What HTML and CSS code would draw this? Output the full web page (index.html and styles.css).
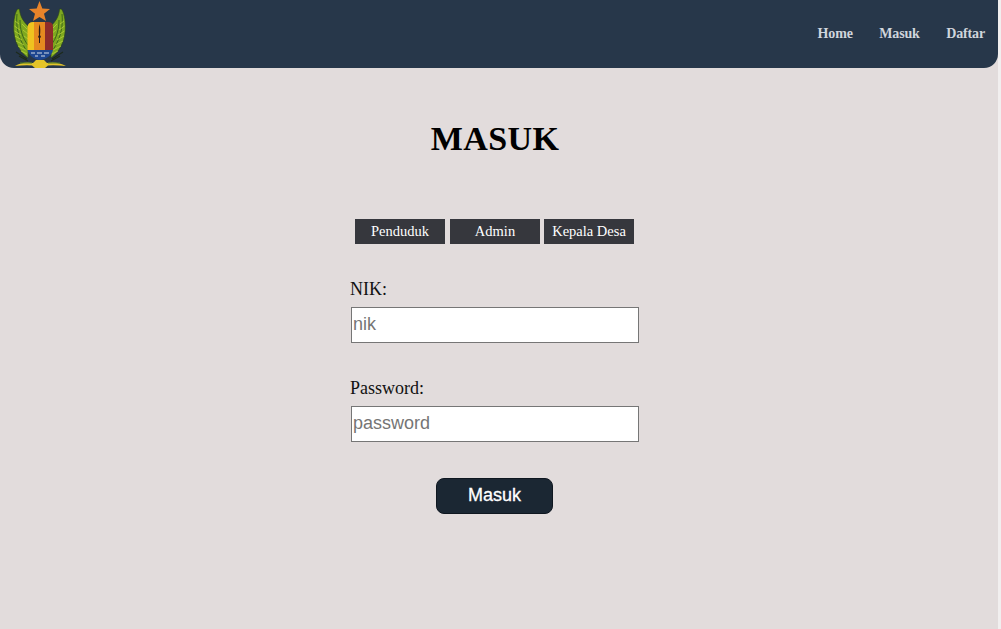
FILE: index.html
```html
<!DOCTYPE html>
<html lang="id">
<head>
<meta charset="utf-8">
<title>Masuk</title>
<link rel="stylesheet" href="styles.css">
</head>
<body>
<header class="topbar">
  <svg class="logo" viewBox="0 0 54 68" width="54" height="68" aria-hidden="true">
    <path d="M26.500 1 L29.300 8.500 L37 9 L31 13.800 L33 21 L26.500 17 L20 21 L22 13.800 L16 9 L23.700 8.500 Z" fill="#e8842a"/>
    <g id="wing">
      <path d="M4.500 9 C1 14 0 24 1 33 C2 42 6 51 15 58 L16 27 C11 22 7 17 6.500 9 Z" fill="#7ea81f" stroke="#2b4420" stroke-width=".7"/>
      <path d="M4 14 C3 24 4 36 13 50 M7 20 C7 28 9 38 15 45" fill="none" stroke="#36601c" stroke-width=".9"/>
      <path d="M2 21 L6 24 M1.500 26 L7 30 M1.500 31 L8 35 M2 36 L9 40 M3 41 L11 45 M5 46 L13 50 M8 51 L14 54 M9 24 L14 29 M10 30 L15 34 M11 36 L15 39" fill="none" stroke="#b6cf3a" stroke-width=".8"/>
    </g>
    <use href="#wing" transform="matrix(-1 0 0 1 53 0)"/>
    <path d="M14.500 27 Q15 22 20 22 H21 V50 H14.500 Z" fill="#efc31f"/>
    <path d="M21 22 H32 V50 H21 Z" fill="#e58a20"/>
    <path d="M32 22 H35 Q40 22 40 27 V50 H32 Z" fill="#8e2c2a"/>
    <path d="M26.500 24 C27.500 28 27.500 31 27 35 L28 37 L27 38 L27 43 H26 L26 38 L25 37 L26 35 C25.700 31 25.800 28 26.500 24 Z" fill="#2a1a16"/>
    <path d="M14.500 50 H40 C39 55 34 59 27 60 C20 59 15.500 55 14.500 50 Z" fill="#1d4690"/>
    <path d="M18 53 H22 M24 53 H29 M31 53 H36 M22 56 H25 M28 56 H32" stroke="#d4dbe6" stroke-width="1"/>
    <path d="M3 52 L14 59 M50 52 L39 59 M6 56 L15 61 M47 56 L38 61" stroke="#1d2a1a" stroke-width="1.100"/>
    <path d="M2 66 Q10 61 20 63 L23 60 H31 L34 63 Q44 61 53 66 Q42 65 35 65.500 L32 68 H22 L19 65.500 Q12 65 2 66 Z" fill="#e4c42a"/>
    <path d="M7 63 H19 M35 63 H47" stroke="#4e7e22" stroke-width="1"/>
  </svg>
  <nav class="nav">
    <a class="nav-link" href="#">Home</a>
    <a class="nav-link" href="#">Masuk</a>
    <a class="nav-link" href="#">Daftar</a>
  </nav>
</header>
<main class="main">
  <h1 class="title">MASUK</h1>
  <div class="tabs">
    <button class="tab" type="button">Penduduk</button>
    <button class="tab tab-admin" type="button">Admin</button>
    <button class="tab" type="button">Kepala Desa</button>
  </div>
  <form class="form">
    <label class="label" for="nik">NIK:</label>
    <input class="input" id="nik" type="text" placeholder="nik">
    <label class="label label-next" for="password">Password:</label>
    <input class="input" id="password" type="password" placeholder="password">
    <button class="submit" type="button">Masuk</button>
  </form>
</main>
</body>
</html>
```
FILE: styles.css
```css
* { box-sizing: border-box; }
html, body { height: 100%; }
body {
  margin: 0;
  overflow: hidden;
  background: #e2dcdc;
  border-right: 3px solid #f1efef;
  font-family: "Liberation Serif", serif;
  color: #111;
}
.topbar {
  height: 68px;
  background: #27374a;
  border-radius: 0 0 14px 14px;
  display: flex;
  justify-content: space-between;
  align-items: center;
  padding: 0 13px;
}
.logo { display: block; }
.nav { display: flex; gap: 26.500px; }
.nav-link {
  color: #d0d5dc;
  font-size: 14px;
  font-weight: bold;
  letter-spacing: -0.15px;
  text-decoration: none;
}
.main {
  width: 990px;
  display: flex;
  flex-direction: column;
  align-items: center;
}
.title {
  margin: 51px 0 0;
  font-size: 34px;
  line-height: 39px;
  font-weight: bold;
  letter-spacing: 0.4px;
  color: #000;
}
.tabs { display: flex; margin-top: 61px; margin-left: -6px; }
.tab {
  width: 90px;
  height: 25px;
  margin: 0 0 0 5px;
  padding: 0;
  border: 0;
  background: #36373d;
  color: #fff;
  font-family: "Liberation Serif", serif;
  font-size: 14.500px;
}
.tab:last-child { margin-left: 4px; }
.form {
  width: 290px;
  margin-top: 35px;
  display: flex;
  flex-direction: column;
  align-items: flex-start;
}
.label { font-size: 18px; line-height: 21px; }
.label-next { margin-top: 35px; }
.input {
  width: 288px;
  height: 36px;
  margin: 7px 0 0 1px;
  padding: 0 1px 2px;
  border: 1px solid #767676;
  background: #fff;
  font-family: "Liberation Sans", sans-serif;
  font-size: 18px;
}
.input::placeholder { color: #757575; }
.submit {
  width: 117px;
  height: 36px;
  margin: 36px 0 0 86px;
  padding: 0 0 2px;
  border: 1px solid #0f1720;
  border-radius: 8px;
  background: #1b2733;
  color: #fff;
  font-family: "Liberation Sans", sans-serif;
  font-size: 18px;
  -webkit-text-stroke: 0.3px #fff;
}
```
